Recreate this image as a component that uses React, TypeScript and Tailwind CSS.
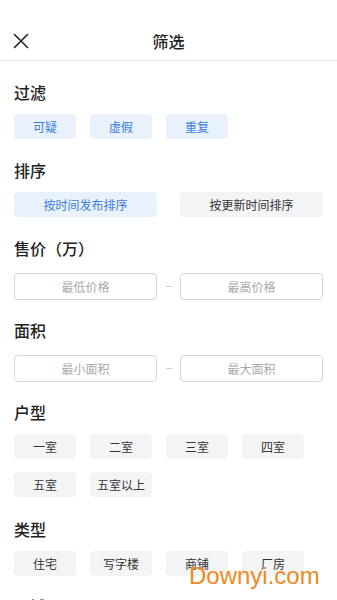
import type { ReactNode } from "react";

const font = { fontFamily: '"Noto Sans CJK SC", "Noto Sans", sans-serif' };

const Title = ({ children }: { children: ReactNode }) => (
    <h3 className="h-[22px] text-[16px] leading-[22px] font-medium text-[#222]">{children}</h3>
);

const Chip = ({ label, active }: { label: string; active?: boolean }) => (
    <div
        className={
            active
                ? "w-[62px] h-[25px] rounded-[4px] bg-[#e9f1fd] text-[#3b7de0] text-[12px] flex items-center justify-center"
                : "w-[62px] h-[25px] rounded-[4px] bg-[#f3f4f6] text-[#333] text-[12px] flex items-center justify-center"
        }
    >
        {label}
    </div>
);

const ChipRow = ({ items, active = false }: { items: string[]; active?: boolean }) => (
    <div className="mt-[11px] flex flex-wrap gap-x-[14px] gap-y-[13px]">
        {items.map((s) => (
            <Chip key={s} label={s} active={active} />
        ))}
    </div>
);

const RangeInput = ({ min, max }: { min: string; max: string }) => (
    <div className="mt-[14px] flex items-center">
        <div className="w-[143px] h-[27px] rounded-[4px] border border-[#d6d6d6] text-[12px] text-[#a9a9a9] flex items-center justify-center">
            {min}
        </div>
        <div className="w-[23px] flex justify-center">
            <div className="w-[6px] h-px bg-[#cfcfcf]" />
        </div>
        <div className="w-[143px] h-[27px] rounded-[4px] border border-[#d6d6d6] text-[12px] text-[#a9a9a9] flex items-center justify-center">
            {max}
        </div>
    </div>
);

export default function App() {
    return (
        <div className="relative w-[337px] h-[600px] overflow-hidden bg-white" style={font}>
            <div className="h-[61px] pt-[21px] border-b-[1.5px] border-[#e6e6e6] relative flex justify-center">
                <svg
                    className="absolute left-[13px] top-[33px]"
                    width="16"
                    height="16"
                    viewBox="0 0 16 16"
                    fill="none"
                    stroke="#222"
                    strokeWidth="1.6"
                    strokeLinecap="round"
                >
                    <path d="M1.5 1.5 L14.5 14.5 M14.5 1.5 L1.5 14.5" />
                </svg>
                <span className="h-[40px] leading-[40px] text-[16px] font-medium text-[#222]">筛选</span>
            </div>

            <div className="px-[14px] pt-[20px]">
                <Title>过滤</Title>
                <ChipRow items={["可疑", "虚假", "重复"]} active />

                <div className="mt-[20px]">
                    <Title>排序</Title>
                    <div className="mt-[11px] flex gap-[23px]">
                        <div className="w-[143px] h-[25px] rounded-[4px] bg-[#e9f1fd] text-[#3b7de0] text-[12px] flex items-center justify-center">
                            按时间发布排序
                        </div>
                        <div className="w-[143px] h-[25px] rounded-[4px] bg-[#f3f4f6] text-[#333] text-[12px] flex items-center justify-center">
                            按更新时间排序
                        </div>
                    </div>
                </div>

                <div className="mt-[20px]">
                    <Title>售价（万）</Title>
                    <RangeInput min="最低价格" max="最高价格" />
                </div>

                <div className="mt-[19px]">
                    <Title>面积</Title>
                    <RangeInput min="最小面积" max="最大面积" />
                </div>

                <div className="mt-[19px]">
                    <Title>户型</Title>
                    <ChipRow items={["一室", "二室", "三室", "四室", "五室", "五室以上"]} />
                </div>

                <div className="mt-[21px]">
                    <Title>类型</Title>
                    <ChipRow items={["住宅", "写字楼", "商铺", "厂房"]} />
                </div>

                <div className="mt-[19px]">
                    <Title>区域</Title>
                </div>
            </div>

            <span
                className="absolute left-[189px] top-[564px] text-[24px] leading-[24px] text-[#f08a1d]"
                style={{ fontFamily: '"Liberation Sans", Arial, sans-serif' }}
            >
                Downyi.com
            </span>
        </div>
    );
}
